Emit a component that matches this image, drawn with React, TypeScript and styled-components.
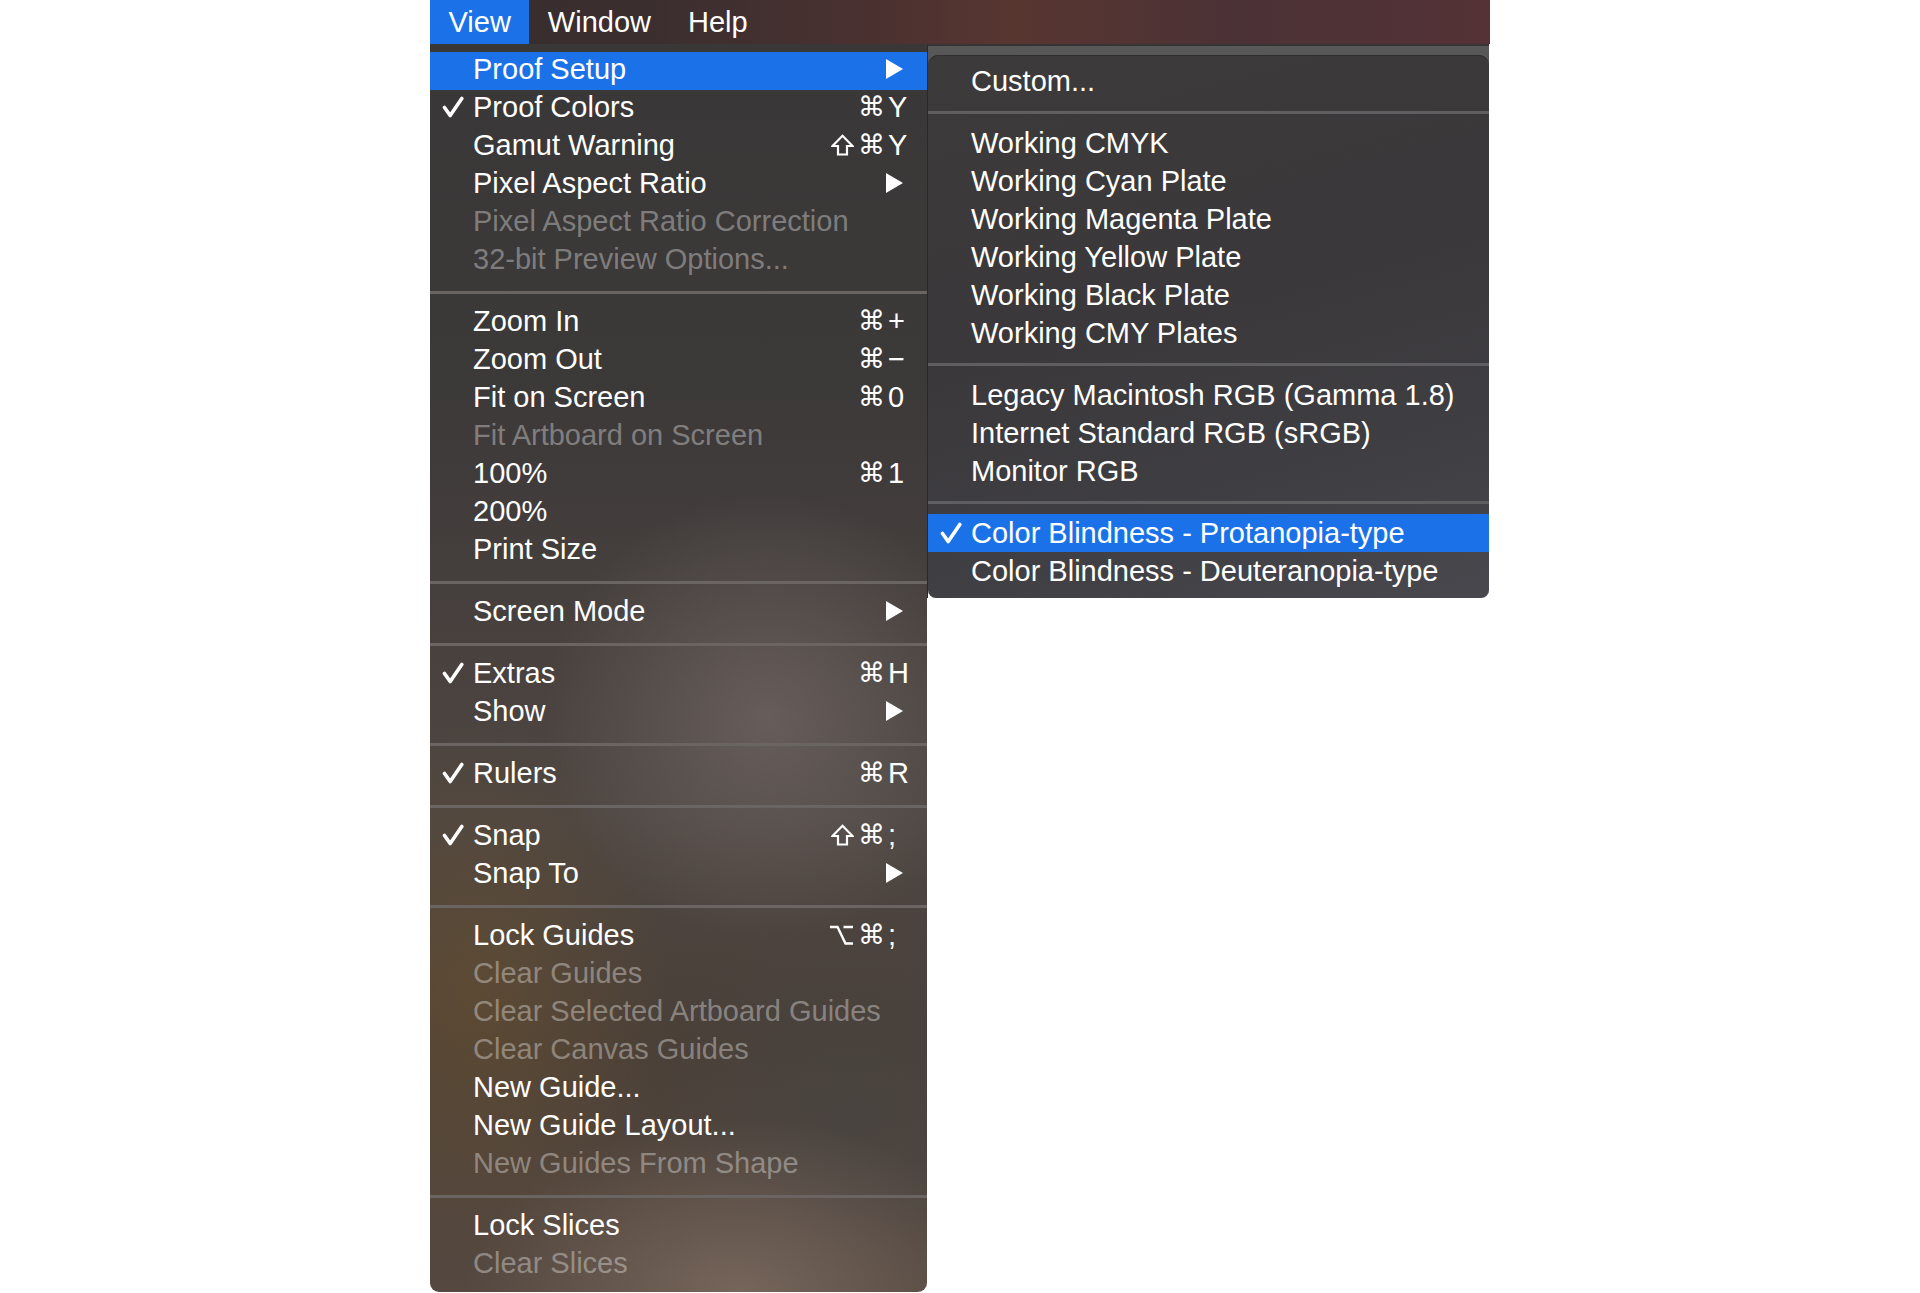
import React from 'react'
import styled, { createGlobalStyle } from 'styled-components'

type Mod = 'shift' | 'option' | 'cmd'

type Item =
  | 'sep'
  | {
      label: string
      checked?: boolean
      disabled?: boolean
      active?: boolean
      arrow?: boolean
      mods?: Mod[]
      shortcut?: string
    }

const viewMenu: Item[] = [
  { label: 'Proof Setup', arrow: true, active: true },
  { label: 'Proof Colors', checked: true, mods: ['cmd'], shortcut: 'Y' },
  { label: 'Gamut Warning', mods: ['shift', 'cmd'], shortcut: 'Y' },
  { label: 'Pixel Aspect Ratio', arrow: true },
  { label: 'Pixel Aspect Ratio Correction', disabled: true },
  { label: '32-bit Preview Options...', disabled: true },
  'sep',
  { label: 'Zoom In', mods: ['cmd'], shortcut: '+' },
  { label: 'Zoom Out', mods: ['cmd'], shortcut: '−' },
  { label: 'Fit on Screen', mods: ['cmd'], shortcut: '0' },
  { label: 'Fit Artboard on Screen', disabled: true },
  { label: '100%', mods: ['cmd'], shortcut: '1' },
  { label: '200%' },
  { label: 'Print Size' },
  'sep',
  { label: 'Screen Mode', arrow: true },
  'sep',
  { label: 'Extras', checked: true, mods: ['cmd'], shortcut: 'H' },
  { label: 'Show', arrow: true },
  'sep',
  { label: 'Rulers', checked: true, mods: ['cmd'], shortcut: 'R' },
  'sep',
  { label: 'Snap', checked: true, mods: ['shift', 'cmd'], shortcut: ';' },
  { label: 'Snap To', arrow: true },
  'sep',
  { label: 'Lock Guides', mods: ['option', 'cmd'], shortcut: ';' },
  { label: 'Clear Guides', disabled: true },
  { label: 'Clear Selected Artboard Guides', disabled: true },
  { label: 'Clear Canvas Guides', disabled: true },
  { label: 'New Guide...' },
  { label: 'New Guide Layout...' },
  { label: 'New Guides From Shape', disabled: true },
  'sep',
  { label: 'Lock Slices' },
  { label: 'Clear Slices', disabled: true },
]

const proofMenu: Item[] = [
  { label: 'Custom...' },
  'sep',
  { label: 'Working CMYK' },
  { label: 'Working Cyan Plate' },
  { label: 'Working Magenta Plate' },
  { label: 'Working Yellow Plate' },
  { label: 'Working Black Plate' },
  { label: 'Working CMY Plates' },
  'sep',
  { label: 'Legacy Macintosh RGB (Gamma 1.8)' },
  { label: 'Internet Standard RGB (sRGB)' },
  { label: 'Monitor RGB' },
  'sep',
  { label: 'Color Blindness - Protanopia-type', checked: true, active: true },
  { label: 'Color Blindness - Deuteranopia-type' },
]

const GlobalStyle = createGlobalStyle`
  html, body {
    margin: 0;
    padding: 0;
    background: #ffffff;
  }
  body {
    font-family: 'Liberation Sans', Arial, sans-serif;
    -webkit-font-smoothing: antialiased;
  }
`

const Check = () => (
  <svg width="22" height="22" viewBox="0 0 22 22">
    <path
      d="M2.5 11.5 L8.2 19.5 L19.8 2.5"
      fill="none"
      stroke="#fff"
      strokeWidth="3.6"
      strokeLinecap="round"
      strokeLinejoin="round"
    />
  </svg>
)

const Arrow = () => (
  <svg width="17" height="20" viewBox="0 0 17 20">
    <path d="M0 0 L17 10 L0 20 Z" fill="#fff" />
  </svg>
)

const ShiftIcon = () => (
  <svg width="23" height="22" viewBox="0 0 23 22">
    <path
      d="M11.5 1.8 L21.5 12 H16 V20.5 H7 V12 H1.5 Z"
      fill="none"
      stroke="#fff"
      strokeWidth="2.2"
      strokeLinejoin="miter"
    />
  </svg>
)

const OptionIcon = () => (
  <svg width="25" height="22" viewBox="0 0 25 22">
    <path
      d="M1 3 H8.5 L16.5 19.5 H24 M14.5 3 H24"
      fill="none"
      stroke="#fff"
      strokeWidth="2.4"
    />
  </svg>
)

const ModGlyph = ({ mod }: { mod: Mod }) => {
  if (mod === 'shift') return <ShiftIcon />
  if (mod === 'option') return <OptionIcon />
  return <Cmd>⌘</Cmd>
}

const renderItems = (items: Item[], tone: 'main' | 'sub') =>
  items.map((item, i) => {
    if (item === 'sep') return <Separator key={i} $tone={tone} />
    return (
      <Row key={i} $active={item.active} $disabled={item.disabled} $tone={tone}>
        <CheckSlot>{item.checked && <Check />}</CheckSlot>
        <Label>{item.label}</Label>
        {(item.shortcut || item.arrow) && (
          <Trailing>
            {item.shortcut && (
              <>
                <Mods>
                  {item.mods?.map((m) => (
                    <ModGlyph key={m} mod={m} />
                  ))}
                </Mods>
                <Key>{item.shortcut}</Key>
              </>
            )}
            {item.arrow && (
              <ArrowSlot>
                <Arrow />
              </ArrowSlot>
            )}
          </Trailing>
        )}
      </Row>
    )
  })

const App = () => {
  return (
    <>
      <GlobalStyle />
      <Screen>
        <MenuBar>
          <MenuTitle $active>View</MenuTitle>
          <MenuTitle>Window</MenuTitle>
          <MenuTitle>Help</MenuTitle>
        </MenuBar>
        <Menus>
          <MainMenu>{renderItems(viewMenu, 'main')}</MainMenu>
          <SubMenu>
            <SubPanel>{renderItems(proofMenu, 'sub')}</SubPanel>
          </SubMenu>
        </Menus>
      </Screen>
    </>
  )
}

const Screen = styled.div`
  width: 1060px;
  margin: 0 auto;
  height: 1293px;
`

const MenuBar = styled.div`
  display: flex;
  height: 44px;
  background: linear-gradient(
    90deg,
    #372d2e 0%,
    #3b2e2f 20%,
    #4a3130 42%,
    #583630 55%,
    #4b3236 76%,
    #543236 100%
  );
`

const MenuTitle = styled.div<{ $active?: boolean }>`
  padding: 0 18.5px;
  height: 44px;
  line-height: 44px;
  font-size: 29px;
  color: #ffffff;
  background: ${(p) => (p.$active ? '#1b72e8' : 'transparent')};
`

const Menus = styled.div`
  display: flex;
  align-items: flex-start;
`

const MainMenu = styled.div`
  width: 497px;
  padding: 8px 0;
  border-radius: 0 0 9px 9px;
  background:
    radial-gradient(ellipse 45% 18% at 68% 54%, rgba(125, 115, 112, 0.55), transparent 100%),
    radial-gradient(ellipse 40% 22% at 8% 76%, rgba(115, 85, 45, 0.45), transparent 100%),
    radial-gradient(ellipse 55% 14% at 62% 100%, rgba(140, 120, 108, 0.6), transparent 100%),
    radial-gradient(ellipse 40% 16% at 85% 86%, rgba(70, 70, 70, 0.5), transparent 100%),
    linear-gradient(
      180deg,
      #393737 0%,
      #3c3939 28%,
      #48413e 48%,
      #4d4642 62%,
      #4a4038 80%,
      #544840 100%
    );
`

const SubMenu = styled.div`
  width: 561px;
  border-left: 1px solid #2a2828;
  border-top: 2px solid #353535;
  background: linear-gradient(#585858, #555555) top / 100% 24px no-repeat;
`

const SubPanel = styled.div`
  margin-top: 9px;
  padding: 7px 0 8px;
  border-radius: 10px 10px 8px 8px;
  box-shadow: inset 0 1px 0 #2f2d2e;
  background: linear-gradient(165deg, #3d3a3b 0%, #3a383a 45%, #3f3e42 75%, #48484e 100%);
  overflow: hidden;
`

const Row = styled.div<{ $active?: boolean; $disabled?: boolean; $tone: 'main' | 'sub' }>`
  box-sizing: border-box;
  display: flex;
  align-items: center;
  height: 38px;
  padding-left: 12px;
  padding-bottom: ${(p) => (p.$tone === 'main' ? '4px' : '0')};
  font-size: 29px;
  line-height: 34px;
  white-space: nowrap;
  color: ${(p) => (p.$disabled ? 'rgba(255, 255, 255, 0.36)' : '#ffffff')};
  background: ${(p) => (p.$active ? '#1b72e8' : 'transparent')};
`

const CheckSlot = styled.div`
  width: 31px;
  height: 30px;
  display: flex;
  align-items: center;
  justify-content: flex-start;
`

const Label = styled.span`
  flex: 1;
`

const Trailing = styled.div`
  display: flex;
  align-items: center;
  justify-content: flex-end;
  width: 110px;
  padding-right: 17px;
`

const Mods = styled.span`
  display: flex;
  align-items: center;
  gap: 4px;
`

const Cmd = styled.span`
  font-family: 'DejaVu Sans', sans-serif;
  font-size: 27px;
  line-height: 30px;
`

const Key = styled.span`
  width: 22px;
  margin-left: 3px;
  font-size: 29px;
  text-align: left;
`

const ArrowSlot = styled.span`
  display: flex;
  margin-right: 7px;
`

const Separator = styled.div<{ $tone: 'main' | 'sub' }>`
  height: 24px;
  display: flex;
  align-items: center;
  &::after {
    content: '';
    display: block;
    width: 100%;
    height: 3px;
    background: ${(p) => (p.$tone === 'main' ? '#6a6462' : '#5f5e61')};
  }
`

export default App
